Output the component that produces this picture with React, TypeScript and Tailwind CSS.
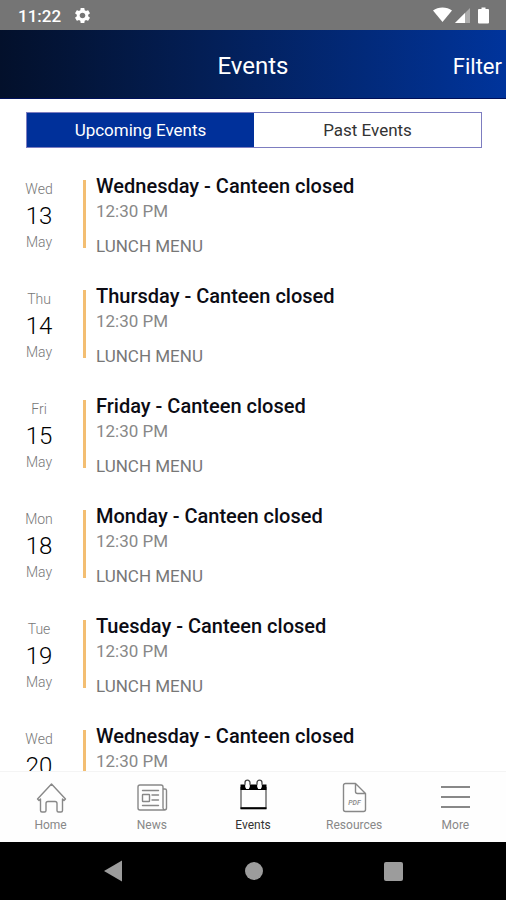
import { useState } from "react"
import { clsx } from "clsx"
import { MdSettings } from "react-icons/md"

type SchoolEvent = {
  id: number
  weekday: string
  day: number
  month: string
  title: string
  time: string
  note: string
}

const events: SchoolEvent[] = [
  { id: 1, weekday: "Wed", day: 13, month: "May", title: "Wednesday - Canteen closed", time: "12:30 PM", note: "LUNCH MENU" },
  { id: 2, weekday: "Thu", day: 14, month: "May", title: "Thursday - Canteen closed", time: "12:30 PM", note: "LUNCH MENU" },
  { id: 3, weekday: "Fri", day: 15, month: "May", title: "Friday - Canteen closed", time: "12:30 PM", note: "LUNCH MENU" },
  { id: 4, weekday: "Mon", day: 18, month: "May", title: "Monday - Canteen closed", time: "12:30 PM", note: "LUNCH MENU" },
  { id: 5, weekday: "Tue", day: 19, month: "May", title: "Tuesday - Canteen closed", time: "12:30 PM", note: "LUNCH MENU" },
  { id: 6, weekday: "Wed", day: 20, month: "May", title: "Wednesday - Canteen closed", time: "12:30 PM", note: "LUNCH MENU" },
]

function HomeIcon() {
  return (
    <svg viewBox="0 0 32 32" className="size-8" fill="none" stroke="currentColor" strokeWidth="1.4" strokeLinejoin="round">
      <path d="M16.500 2 30.500 17 29 18.500 27.500 17V28.500a1.500 1.500 0 0 1-1.500 1.500H23.500a1.500 1.500 0 0 1-1.500-1.500V21.500a2 2 0 0 0-2-2h-7a2 2 0 0 0-2 2v7a1.500 1.500 0 0 1-1.500 1.500H7a1.500 1.500 0 0 1-1.500-1.500V17L4 18.500 2.500 17Z" />
    </svg>
  )
}

function NewsIcon() {
  return (
    <svg viewBox="0 0 32 32" className="size-8" fill="none" stroke="currentColor" strokeWidth="1.4" strokeLinejoin="round" strokeLinecap="round">
      <path d="M27 26V5a2 2 0 0 0-2-2H4a2 2 0 0 0-2 2v21a2 2 0 0 0 2 2h24.500a2 2 0 0 0 2-2V8.500A1.500 1.500 0 0 0 29 7h-2M27 26a1.700 1.700 0 0 0 3.500 0" />
      <path d="M6.500 8.500h16M16 13h6.500M16 18h6.500M6.500 23.500h16" />
      <rect x="6.500" y="12.500" width="7" height="7" rx="0.5" />
    </svg>
  )
}

function CalendarIcon() {
  return (
    <svg viewBox="0 0 32 32" className="size-8 overflow-visible" fill="none">
      <path d="M4 5v21h25V5" stroke="#666" strokeWidth="1.4" />
      <path d="M3.500 2.500h26V8h-26z" fill="#000" />
      <path d="M3.500 26.300h26" stroke="#000" strokeWidth="2" />
      <path d="M8.200 1a2.300 2.300 0 0 1 4.600 0V5L11.800 7H9.200L8.200 5ZM20.200 1a2.300 2.300 0 0 1 4.600 0V5L23.800 7H21.200L20.200 5Z" fill="#fff" />
      <path d="M8 2.800V.700a2.500 2.500 0 0 1 5 0V2.800M20 2.800V.700a2.500 2.500 0 0 1 5 0V2.800" stroke="#444" strokeWidth="1.3" />
    </svg>
  )
}

function PdfIcon() {
  return (
    <svg viewBox="0 0 32 32" className="size-8" fill="none" stroke="currentColor" strokeWidth="1.4" strokeLinejoin="round">
      <path d="M17.500 1.500H7.500a2 2 0 0 0-2 2v24a2 2 0 0 0 2 2h18a2 2 0 0 0 2-2V11.500Zm0 0V9.500a2 2 0 0 0 2 2H27.500" />
      <text x="16.500" y="22.500" textAnchor="middle" fontSize="7" fontStyle="italic" fontWeight="500" fill="currentColor" stroke="none">
        PDF
      </text>
    </svg>
  )
}

function MoreIcon() {
  return (
    <svg viewBox="0 0 32 32" className="size-8" fill="none" stroke="currentColor" strokeWidth="2">
      <path d="M2 5h29M2 15h29M2 25h29" />
    </svg>
  )
}

const navItems = [
  { label: "Home", icon: HomeIcon },
  { label: "News", icon: NewsIcon },
  { label: "Events", icon: CalendarIcon },
  { label: "Resources", icon: PdfIcon },
  { label: "More", icon: MoreIcon },
]

function StatusBar() {
  return (
    <div className="flex h-[30px] shrink-0 items-center justify-between bg-[#757575] pl-[18px] pr-4 pt-px text-white">
      <div className="flex items-center gap-3">
        <span className="text-[17px] font-medium leading-6">11:22</span>
        <MdSettings className="size-[19px]" />
      </div>
      <svg viewBox="0 0 58 18" className="h-[18px] w-[58px]" fill="currentColor">
        <path d="M1 3.500C6-.5 15-.5 20 3.500L10.500 15Z" />
        <path d="M38 1V16H23Z" opacity="0.4" />
        <path d="M33 6V16H23Z" />
        <path d="M49.500 .500h4V2H56a1 1 0 0 1 1 1V15.500a1 1 0 0 1-1 1h-9a1 1 0 0 1-1-1V3a1 1 0 0 1 1-1h2.500Z" />
      </svg>
    </div>
  )
}

function EventRow({ event }: { event: SchoolEvent }) {
  return (
    <li className="flex items-start">
      <div className="w-[30px] text-center font-light">
        <p className="pt-0.5 text-sm leading-[26px] text-[#777]">{event.weekday}</p>
        <p className="text-2xl leading-7 text-black">{event.day}</p>
        <p className="text-sm leading-6 text-[#777]">{event.month}</p>
      </div>
      <div className="ml-[29px] mt-1.5 h-[68px] w-[3px] shrink-0 bg-[#f3be72]" />
      <div className="ml-2.5 min-w-0 flex-1">
        <h2 className="text-xl font-medium leading-6 text-[#0c0c14]">{event.title}</h2>
        <p className="text-[17px] leading-[26px] text-[#888]">{event.time}</p>
        <p className="mt-2.5 text-[17px] leading-6 text-[#777]">{event.note}</p>
      </div>
    </li>
  )
}

export default function App() {
  const [tab, setTab] = useState("Upcoming Events")
  const [page, setPage] = useState("Events")

  return (
    <div className="flex h-screen flex-col overflow-hidden bg-white font-[Roboto,sans-serif]">
      <StatusBar />

      <header className="grid h-[69px] shrink-0 grid-cols-3 items-center border-b border-[#00105a] bg-linear-to-r from-[#03102b] to-[#00349c] pt-1 text-white">
        <h1 className="col-start-2 text-center text-2xl">Events</h1>
        <button className="justify-self-end pr-1 text-[22px]">Filter</button>
      </header>

      <div className="ml-[26px] mr-6 mt-[13px] grid h-9 shrink-0 grid-cols-2 border border-[#7d7dc0]">
        {["Upcoming Events", "Past Events"].map((label) => (
          <button
            key={label}
            onClick={() => setTab(label)}
            className={clsx("pt-0.5 text-[17px]", tab === label ? "bg-[#00309a] text-white" : "bg-white text-[#333]")}
          >
            {label}
          </button>
        ))}
      </div>

      <main className="min-h-0 flex-1 overflow-y-auto px-6 pt-[26px] [scrollbar-width:none]">
        <ul className="flex flex-col gap-[26px]">
          {events.map((event) => (
            <EventRow key={event.id} event={event} />
          ))}
        </ul>
      </main>

      <nav className="grid h-[71px] shrink-0 grid-cols-5 border-t border-[#f4f4f4] bg-[#fefefe]">
        {navItems.map(({ label, icon: Icon }) => (
          <button
            key={label}
            onClick={() => setPage(label)}
            className={clsx("flex flex-col items-center gap-[3px] pt-2.5", page === label ? "text-[#333]" : "text-[#888]")}
          >
            <Icon />
            <span className="text-xs leading-4">{label}</span>
          </button>
        ))}
      </nav>

      <div className="flex h-[58px] shrink-0 items-center justify-around bg-black px-[43px] text-[#9c9c9c]">
        <button aria-label="Back">
          <svg viewBox="0 0 20 22" className="h-[22px] w-5" fill="currentColor">
            <path d="M18 .500v21L0 11Z" />
          </svg>
        </button>
        <button aria-label="Home screen" className="size-[18px] rounded-full bg-[#9c9c9c]" />
        <button aria-label="Recent apps" className="size-[19px] rounded-xs bg-[#9c9c9c]" />
      </div>
    </div>
  )
}
